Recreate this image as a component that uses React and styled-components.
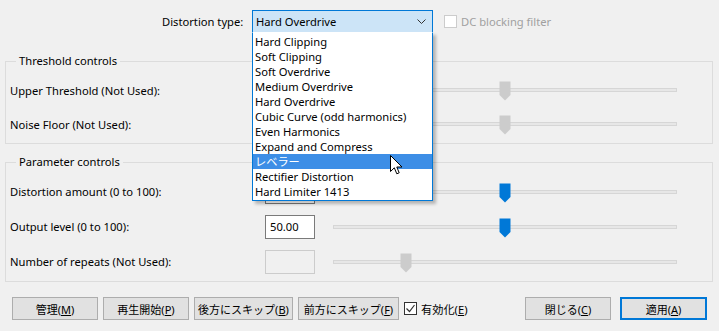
import React from 'react'
import styled, { createGlobalStyle } from 'styled-components'

const Global = createGlobalStyle`
  html, body {
    margin: 0;
    padding: 0;
    background: #f0f0f0;
  }
  body {
    font-family: "Noto Sans", "Noto Sans CJK JP", sans-serif;
    font-size: 11.2px;
    color: #000;
  }
`

const Page = styled.div`
  position: relative;
  width: 719px;
  height: 331px;
  overflow: hidden;
  padding-top: 10px;
  box-sizing: border-box;
`

const TopRow = styled.div`
  display: flex;
  align-items: center;
  height: 23px;
  padding-left: 162px;
`

const TypeLabel = styled.span`
  width: 90px;
`

const ComboWrap = styled.div`
  position: relative;
  width: 181px;
  height: 23px;
`

const Combo = styled.div`
  display: flex;
  align-items: center;
  justify-content: space-between;
  box-sizing: border-box;
  height: 23px;
  padding: 0 6px 0 3px;
  background: #cce4f7;
  border: 1px solid #0078d7;
`

const DropList = styled.ul`
  position: absolute;
  top: 22px;
  left: 0;
  z-index: 5;
  width: 181px;
  box-sizing: border-box;
  margin: 0;
  padding: 1px 0;
  list-style: none;
  background: #fff;
  border: 1px solid #0078d7;
  border-top-color: #fff;
  box-shadow: 3px 3px 3px rgba(0, 0, 0, 0.25);
`

const DropItem = styled.li`
  height: 15px;
  line-height: 15px;
  padding-left: 2px;
  white-space: nowrap;
  background: ${(p) => (p.$active ? '#3d8ee6' : 'transparent')};
  color: ${(p) => (p.$active ? '#fff' : '#000')};
`

const CheckRow = styled.label`
  display: flex;
  align-items: center;
  gap: 4px;
  margin-left: ${(p) => p.$ml || 0}px;
  white-space: nowrap;
  color: ${(p) => (p.$disabled ? '#a0a0a0' : '#000')};
`

const Box = styled.span`
  display: inline-flex;
  align-items: center;
  justify-content: center;
  width: 13px;
  height: 13px;
  box-sizing: border-box;
  background: #fff;
  border: 1px solid ${(p) => (p.$disabled ? '#cccccc' : '#333')};
`

const Group = styled.div`
  margin: ${(p) => p.$mt}px 6px 0 5px;
  border: 1px solid #dcdcdc;
  padding: 0 4px 2px 4px;
`

const Legend = styled.div`
  display: table;
  margin: -9px 0 0 6px;
  padding: 0 3px;
  height: 16px;
  line-height: 16px;
  background: #f0f0f0;
`

const Rows = styled.div`
  margin-top: 4px;
`

const Row = styled.div`
  display: grid;
  grid-template-columns: 255px 68px 344px;
  align-items: center;
  height: ${(p) => p.$h}px;
  white-space: nowrap;
`

const Field = styled.div`
  width: 50px;
  height: 24px;
  box-sizing: border-box;
  padding: 0 4px;
  line-height: 22px;
  background: ${(p) => (p.$disabled ? '#f0f0f0' : '#fff')};
  border: 1px solid ${(p) => (p.$disabled ? '#cccccc' : '#7a7a7a')};
`

const Track = styled.div`
  position: relative;
  height: 4px;
  box-sizing: border-box;
  background: #e7e7e7;
  border: 1px solid #d6d6d6;
`

const Thumb = styled.svg`
  position: absolute;
  top: -8px;
  margin-left: -6px;
`

const ButtonBar = styled.div`
  display: flex;
  align-items: center;
  gap: 5px;
  margin-top: 15px;
  padding: 0 12px;
`

const Button = styled.button`
  width: ${(p) => p.$w}px;
  height: 23px;
  margin-left: ${(p) => p.$ml || '0'};
  padding: 0;
  font: inherit;
  font-size: 11px;
  white-space: nowrap;
  color: #000;
  background: #e1e1e1;
  border: ${(p) => (p.$primary ? '2px solid #0078d7' : '1px solid #adadad')};
`

const Cursor = styled.svg`
  position: absolute;
  left: 390px;
  top: 155px;
  z-index: 6;
`

const items = [
  'Hard Clipping',
  'Soft Clipping',
  'Soft Overdrive',
  'Medium Overdrive',
  'Hard Overdrive',
  'Cubic Curve (odd harmonics)',
  'Even Harmonics',
  'Expand and Compress',
  'レベラー',
  'Rectifier Distortion',
  'Hard Limiter 1413',
]

const Slider = ({ value, disabled }) => (
  <Track>
    <Thumb width="12" height="20" viewBox="0 0 12 20" style={{ left: `${value}%` }}>
      <path d="M0.5 0.5 H11.5 V14 L6 19.5 L0.5 14 Z" fill={disabled ? '#cccccc' : '#0078d7'} />
    </Thumb>
  </Track>
)

const Mn = ({ label, k }) => (
  <span>
    {label}(<u>{k}</u>)
  </span>
)

const App = () => (
  <Page>
    <Global />
    <TopRow>
      <TypeLabel>Distortion type:</TypeLabel>
      <ComboWrap>
        <Combo>
          <span>Hard Overdrive</span>
          <svg width="9" height="6" viewBox="0 0 9 6">
            <path d="M0.5 0.5 L4.5 4.5 L8.5 0.5" fill="none" stroke="#333" strokeWidth="1" />
          </svg>
        </Combo>
        <DropList>
          {items.map((it) => (
            <DropItem key={it} $active={it === 'レベラー'}>
              {it}
            </DropItem>
          ))}
        </DropList>
      </ComboWrap>
      <CheckRow $disabled $ml={11}>
        <Box $disabled />
        <span>DC blocking filter</span>
      </CheckRow>
    </TopRow>

    <Group $mt={28}>
      <Legend>Threshold controls</Legend>
      <Rows>
        <Row $h={34}>
          <span>Upper Threshold (Not Used):</span>
          <span />
          <Slider value={50} disabled />
        </Row>
        <Row $h={34}>
          <span>Noise Floor (Not Used):</span>
          <span />
          <Slider value={50} disabled />
        </Row>
      </Rows>
    </Group>

    <Group $mt={18}>
      <Legend>Parameter controls</Legend>
      <Rows>
        <Row $h={35}>
          <span>Distortion amount (0 to 100):</span>
          <Field>50.00</Field>
          <Slider value={50} />
        </Row>
        <Row $h={35}>
          <span>Output level (0 to 100):</span>
          <Field>50.00</Field>
          <Slider value={50} />
        </Row>
        <Row $h={35}>
          <span>Number of repeats (Not Used):</span>
          <Field $disabled />
          <Slider value={21} disabled />
        </Row>
      </Rows>
    </Group>

    <ButtonBar>
      <Button $w={86}><Mn label="管理" k="M" /></Button>
      <Button $w={86}><Mn label="再生開始" k="P" /></Button>
      <Button $w={99}><Mn label="後方にスキップ" k="B" /></Button>
      <Button $w={101}><Mn label="前方にスキップ" k="F" /></Button>
      <CheckRow>
        <Box>
          <svg width="11" height="11" viewBox="0 0 11 11">
            <path d="M1.5 5.5 L4.5 8.5 L9.5 2" fill="none" stroke="#333" strokeWidth="1.2" />
          </svg>
        </Box>
        <Mn label="有効化" k="E" />
      </CheckRow>
      <Button $w={86} $ml="auto"><Mn label="閉じる" k="C" /></Button>
      <Button $w={87} $primary $ml="4px"><Mn label="適用" k="A" /></Button>
    </ButtonBar>

    <Cursor width="13" height="21" viewBox="0 0 13 21">
      <path d="M0.5 0.5 V16.5 L4.3 12.8 L6.8 18.8 L9.2 17.8 L6.8 12 H12 Z" fill="#fff" stroke="#000" strokeWidth="1" strokeLinejoin="round" />
    </Cursor>
  </Page>
)

export default App
